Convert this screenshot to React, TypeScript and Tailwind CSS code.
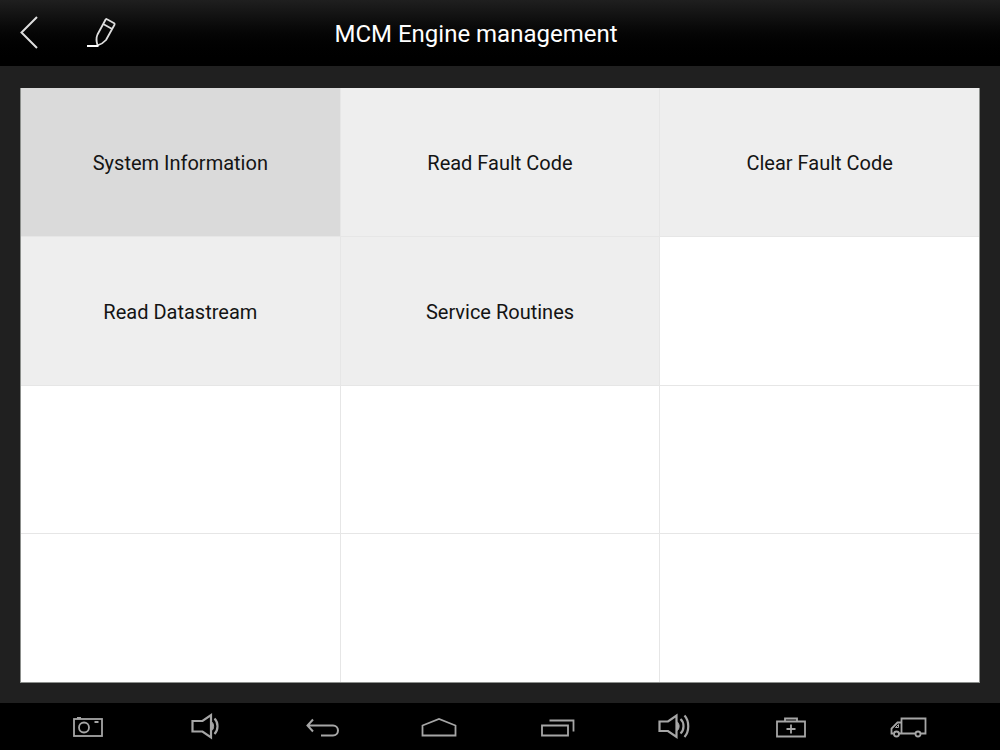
import type { ReactNode } from "react";
import { useState } from "react";
import clsx from "clsx";

const MENU = [
  "System Information",
  "Read Fault Code",
  "Clear Fault Code",
  "Read Datastream",
  "Service Routines",
];
const CELLS = 12;

const NAV: { label: string; icon: ReactNode }[] = [
  {
    label: "Screenshot",
    icon: (
      <g strokeWidth="1.8">
        <rect x="6" y="9" width="28" height="17" />
        <circle cx="16" cy="17.5" r="5" />
        <path d="M9 7.8h4M26.5 12h4" />
      </g>
    ),
  },
  {
    label: "Volume down",
    icon: (
      <g strokeWidth="2.2">
        <path d="M7.5 11H17.5L26 5V27.5L17.5 21.5H7.5Z" />
        <path d="M26 11.5c3.5 1.5 3.5 8 0 9.5z" fill="currentColor" strokeWidth="1" />
        <path d="M29.5 8.5c4 4 4 11.5 0 15.5" />
      </g>
    ),
  },
  {
    label: "Back",
    icon: <path d="M11 9.5L5.5 15.5L11 21.5M5.5 15.5H31a5 5 0 0 1 0 10H19" strokeWidth="2" />,
  },
  {
    label: "Home",
    icon: <path d="M3.5 15.5L20 9L36.5 15.5V25.5H3.5Z" strokeWidth="1.8" />,
  },
  {
    label: "Recent apps",
    icon: <path d="M5 15.5h26v10h-26zM12.5 10.5h24v11" strokeWidth="1.8" />,
  },
  {
    label: "Volume up",
    icon: (
      <g strokeWidth="2.2">
        <path d="M5.5 11.5H14L22.5 5.5V27L14 21H5.5Z" />
        <path d="M22.5 11.5c3.5 1.5 3.5 8 0 9.5z" fill="currentColor" strokeWidth="1" />
        <path d="M26.5 9c4 3.5 4 11 0 14.5M30.5 5.500c5 5.5 5 16 0 21.5" />
      </g>
    ),
  },
  {
    label: "Diagnostics",
    icon: (
      <path d="M6 11.5h28v15h-28zM14 11.5v-3h12v3M20 14.500v9M15.500 19h9" strokeWidth="1.8" />
    ),
  },
  {
    label: "Vehicle",
    icon: (
      <g strokeWidth="1.8">
        <path d="M33 23.5h4.5v-15h-24v15h14M13.5 12.5H9.5L3.500 18.5v5h2M10.5 23.5h3" />
        <path d="M7.5 17.5L10.5 14.5v3z" strokeWidth="1" />
        <circle cx="8.500" cy="24" r="2.5" />
        <circle cx="30" cy="24" r="2.5" />
      </g>
    ),
  },
];

function Header() {
  return (
    <header className="flex h-[66px] items-center bg-linear-to-b from-[#1f1f1f] to-black pl-5 text-white">
      <div className="flex items-center gap-[46px]">
        <button type="button" aria-label="Go back">
          <svg className="block h-[34px] w-5" viewBox="0 0 20 34" fill="none" stroke="#dedede" strokeWidth="2">
            <path d="M17 1L1.5 16.5L17 32" />
          </svg>
        </button>
        <button type="button" aria-label="Edit">
          <svg className="block h-[34px] w-8" viewBox="0 0 32 34" fill="none" stroke="#dedede" strokeWidth="1.8" strokeLinejoin="round">
            <path d="M21 3.2L28.2 7.2Q29 7.8 28.5 8.7L20 24Q16.5 28 11.5 29.3Q9.5 23 11.5 18.5L19.5 3.8Q20 2.6 21 3.2ZM17.2 8L25.7 12.7" />
            <path d="M1 30h11.5" stroke="#ffffff" strokeWidth="2" />
          </svg>
        </button>
      </div>
      <h1 className="flex-1 pt-0.5 pr-[166px] text-center text-2xl">MCM Engine management</h1>
    </header>
  );
}

export default function App() {
  const [selected, setSelected] = useState(0);

  return (
    <div className="flex min-h-screen flex-col bg-[#202020] font-['Roboto',sans-serif]">
      <Header />

      <main className="flex flex-1 flex-col px-5 pt-[22px] pb-5">
        <div className="grid flex-1 grid-cols-3 grid-rows-4 gap-px border-x border-b border-[#8c8f8c] bg-[#e6e6e6]">
          {Array.from({ length: CELLS }, (_, i) =>
            MENU[i] ? (
              <button
                key={i}
                type="button"
                aria-pressed={selected === i}
                onClick={() => setSelected(i)}
                className={clsx("pt-0.5 text-xl text-[#141414]", selected === i ? "bg-[#dadada]" : "bg-[#eeeeee]")}
              >
                {MENU[i]}
              </button>
            ) : (
              <div key={i} className="bg-white" />
            )
          )}
        </div>
      </main>

      <nav className="flex h-[47px] items-center justify-between bg-black pr-[72px] pl-[68px] text-[#a6a6a6]">
        {NAV.map(({ label, icon }) => (
          <button key={label} type="button" aria-label={label}>
            <svg className="block h-[33px] w-10" viewBox="0 0 40 33" fill="none" stroke="currentColor">
              {icon}
            </svg>
          </button>
        ))}
      </nav>
    </div>
  );
}
